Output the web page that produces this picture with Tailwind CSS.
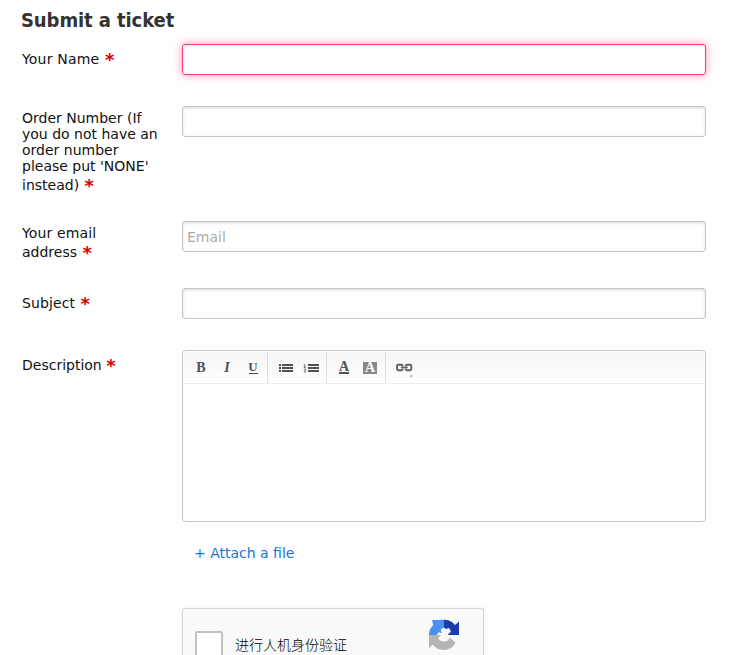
<!DOCTYPE html>
<html lang="en">
<head>
<meta charset="utf-8">
<title>Submit a ticket</title>
<script src="https://cdn.jsdelivr.net/npm/@tailwindcss/browser@4"></script>
</head>
<body class="bg-white overflow-hidden h-[655px] font-['DejaVu_Sans',sans-serif] text-[14px] leading-[16px] text-[#111]">
<main class="pl-[22px] w-[706px]">
  <h1 class="h-11 pt-2 -ml-px text-[20px] leading-6 font-bold text-[#333] font-['DejaVu_Sans_Condensed','DejaVu_Sans',sans-serif] whitespace-nowrap tracking-[-0.09px]">Submit a ticket</h1>
  <form>
    <div class="flex h-[62px]">
      <label class="w-40 shrink-0 pt-[7px] tracking-[0.18px]">Your Name <span class="inline-block ml-px translate-y-[2px] text-[#d90000] font-bold text-[18px] leading-[10px]">*</span></label>
      <input type="text" class="grow h-[31px] bg-white border border-[#ff4081] rounded-[3px] px-1 outline-none shadow-[0_0_8px_rgba(255,64,129,0.6),inset_0_1px_2px_rgba(0,0,0,0.12)]">
    </div>
    <div class="flex h-[115px]">
      <label class="w-40 shrink-0 pt-[4px]">Order Number (If<br>you do not have an<br>order number<br>please put 'NONE'<br><span class="block pt-[3px]">instead) <span class="inline-block ml-px translate-y-[2px] text-[#d90000] font-bold text-[18px] leading-[10px]">*</span></span></label>
      <input type="text" class="grow h-[31px] bg-white border border-[#c6c6c6] rounded-[3px] px-1 shadow-[inset_0_1px_3px_rgba(0,0,0,0.16)]">
    </div>
    <div class="flex h-[67px]">
      <label class="w-40 shrink-0 pt-[4px]"><span class="tracking-[0.12px]">Your email</span><br><span class="block pt-[3px]">address <span class="inline-block ml-px translate-y-[2px] text-[#d90000] font-bold text-[18px] leading-[10px]">*</span></span></label>
      <input type="text" placeholder="Email" class="grow h-[31px] bg-white border border-[#c6c6c6] rounded-[3px] px-1 placeholder:text-[#aaa] shadow-[inset_0_1px_3px_rgba(0,0,0,0.16)]">
    </div>
    <div class="flex h-[62px]">
      <label class="w-40 shrink-0 pt-[7px] tracking-[0.1px]">Subject <span class="inline-block ml-px translate-y-[2px] text-[#d90000] font-bold text-[18px] leading-[10px]">*</span></label>
      <input type="text" class="grow h-[31px] bg-white border border-[#c6c6c6] rounded-[3px] px-1 shadow-[inset_0_1px_3px_rgba(0,0,0,0.16)]">
    </div>
    <div class="flex">
      <label class="w-40 shrink-0 pt-[7px]">Description <span class="inline-block translate-y-[2px] text-[#d90000] font-bold text-[18px] leading-[10px]">*</span></label>
      <div class="grow h-[172px] border border-[#c4c4c4] rounded-[4px] px-px pt-px">
        <div class="flex h-8 border-b border-[#eee] bg-linear-to-b from-[#f5f5f5] to-white text-[#505050] font-['Liberation_Serif',serif] text-[14px]">
          <div class="flex items-center w-[84px] h-full border-r border-[#ddd] pl-[4px]">
            <b class="w-[26px] text-center">B</b>
            <b class="w-[26px] text-center italic">I</b>
            <span class="w-[26px] flex justify-center"><span class="leading-[12px] h-[13px] border-b border-[#505050] w-[9px] text-[13px] font-bold flex justify-center">U</span></span>
          </div>
          <div class="flex items-center w-[59px] h-full border-r border-[#ddd] pl-[11px] gap-[10px]">
            <svg width="14" height="10" viewBox="0 0 14 10" shape-rendering="crispEdges" fill="#505050"><path d="M0 1h2v2H0zM0 4h2v2H0zM0 7h2v2H0zM3 1h11v2H3zM3 4h11v2H3zM3 7h11v2H3z"/></svg>
            <svg width="16" height="10" viewBox="0 0 16 10"><path fill="#505050" shape-rendering="crispEdges" d="M5 1h11v2H5zM5 4h11v2H5zM5 7h11v2H5z"/><path fill="none" stroke="#606060" stroke-width=".9" d="M.8 1.500h1v3M.8 4.400h2.200M.8 6.200h1.900v1L1.100 8.800h2"/></svg>
          </div>
          <div class="flex items-center w-[59px] h-full border-r border-[#ddd] pl-[12px] gap-[14px]">
            <span class="font-bold text-[14px] leading-[11px] h-[13px] w-[10px] border-b-2 border-[#505050] flex justify-center">A</span>
            <span class="bg-[#888] text-white font-bold text-[14px] leading-[12px] w-[14px] h-3 flex justify-center">A</span>
          </div>
          <div class="pl-[10px] pt-[11px]">
            <svg width="18" height="16" viewBox="0 0 18 16"><g fill="none" stroke="#606060" stroke-width="1.9"><path d="M6.700 3.500V3.200Q6.700 1.700 5.500 1.700H2.200Q1 1.700 1 3.200v2.600Q1 7.300 2.200 7.300h3.300Q6.700 7.300 6.700 5.500M9.800 5.500Q9.800 7.300 11 7.300h3.100q1.200 0 1.200-1.500V3.200Q15.300 1.700 14.100 1.700H11Q9.800 1.700 9.800 3.500"/><path stroke-width="1.500" d="M4.800 4.500h7"/></g><path d="M13.500 12.500h3.500l-1.700 2z" fill="#999"/></svg>
          </div>
        </div>
      </div>
    </div>
    <a class="block pl-[172px] pt-[23px] h-[86px] text-[#1675d9]">+ Attach a file</a>
    <div class="ml-40 w-[302px] h-[76px] border border-[#d3d3d3] rounded-[3px] bg-[#f9f9f9] shadow-[0_0_4px_1px_rgba(0,0,0,0.05)] flex">
      <div class="ml-3 mt-[22px] w-7 h-7 border-2 border-[#c1c1c1] rounded-[2px] bg-white"></div>
      <span class="ml-3 mt-[27px] w-[193px] text-black text-[14px] font-light font-['Noto_Sans_CJK_SC',sans-serif]">进行人机身份验证</span>
      <svg class="mt-[10px]" width="32" height="32" viewBox="0 0 32 32">
        <path fill="#4a90f5" d="M16 .800v8l-2.500.700-.8 2 1.300 2.500-3.500-.7L9 16H1q0-6 4.200-10L4 1h6.500Q13 .6 16 .8z"/>
        <path fill="#1c3aa9" d="M16 .800q7 0 11 5.200l4-3.500V16H19.500l3.500-3.500-2-3.500-3 1-2-1.500z"/>
        <path fill="#b5b5b5" d="M1 16h12l-3 3.200q2 3.300 6 3.300 3.500 0 5-2.500l1-1.500 5.500 5.500q-4 7-11.500 7-7 0-11-5.200L1 29z"/>
      </svg>
    </div>
  </form>
</main>
</body>
</html>
